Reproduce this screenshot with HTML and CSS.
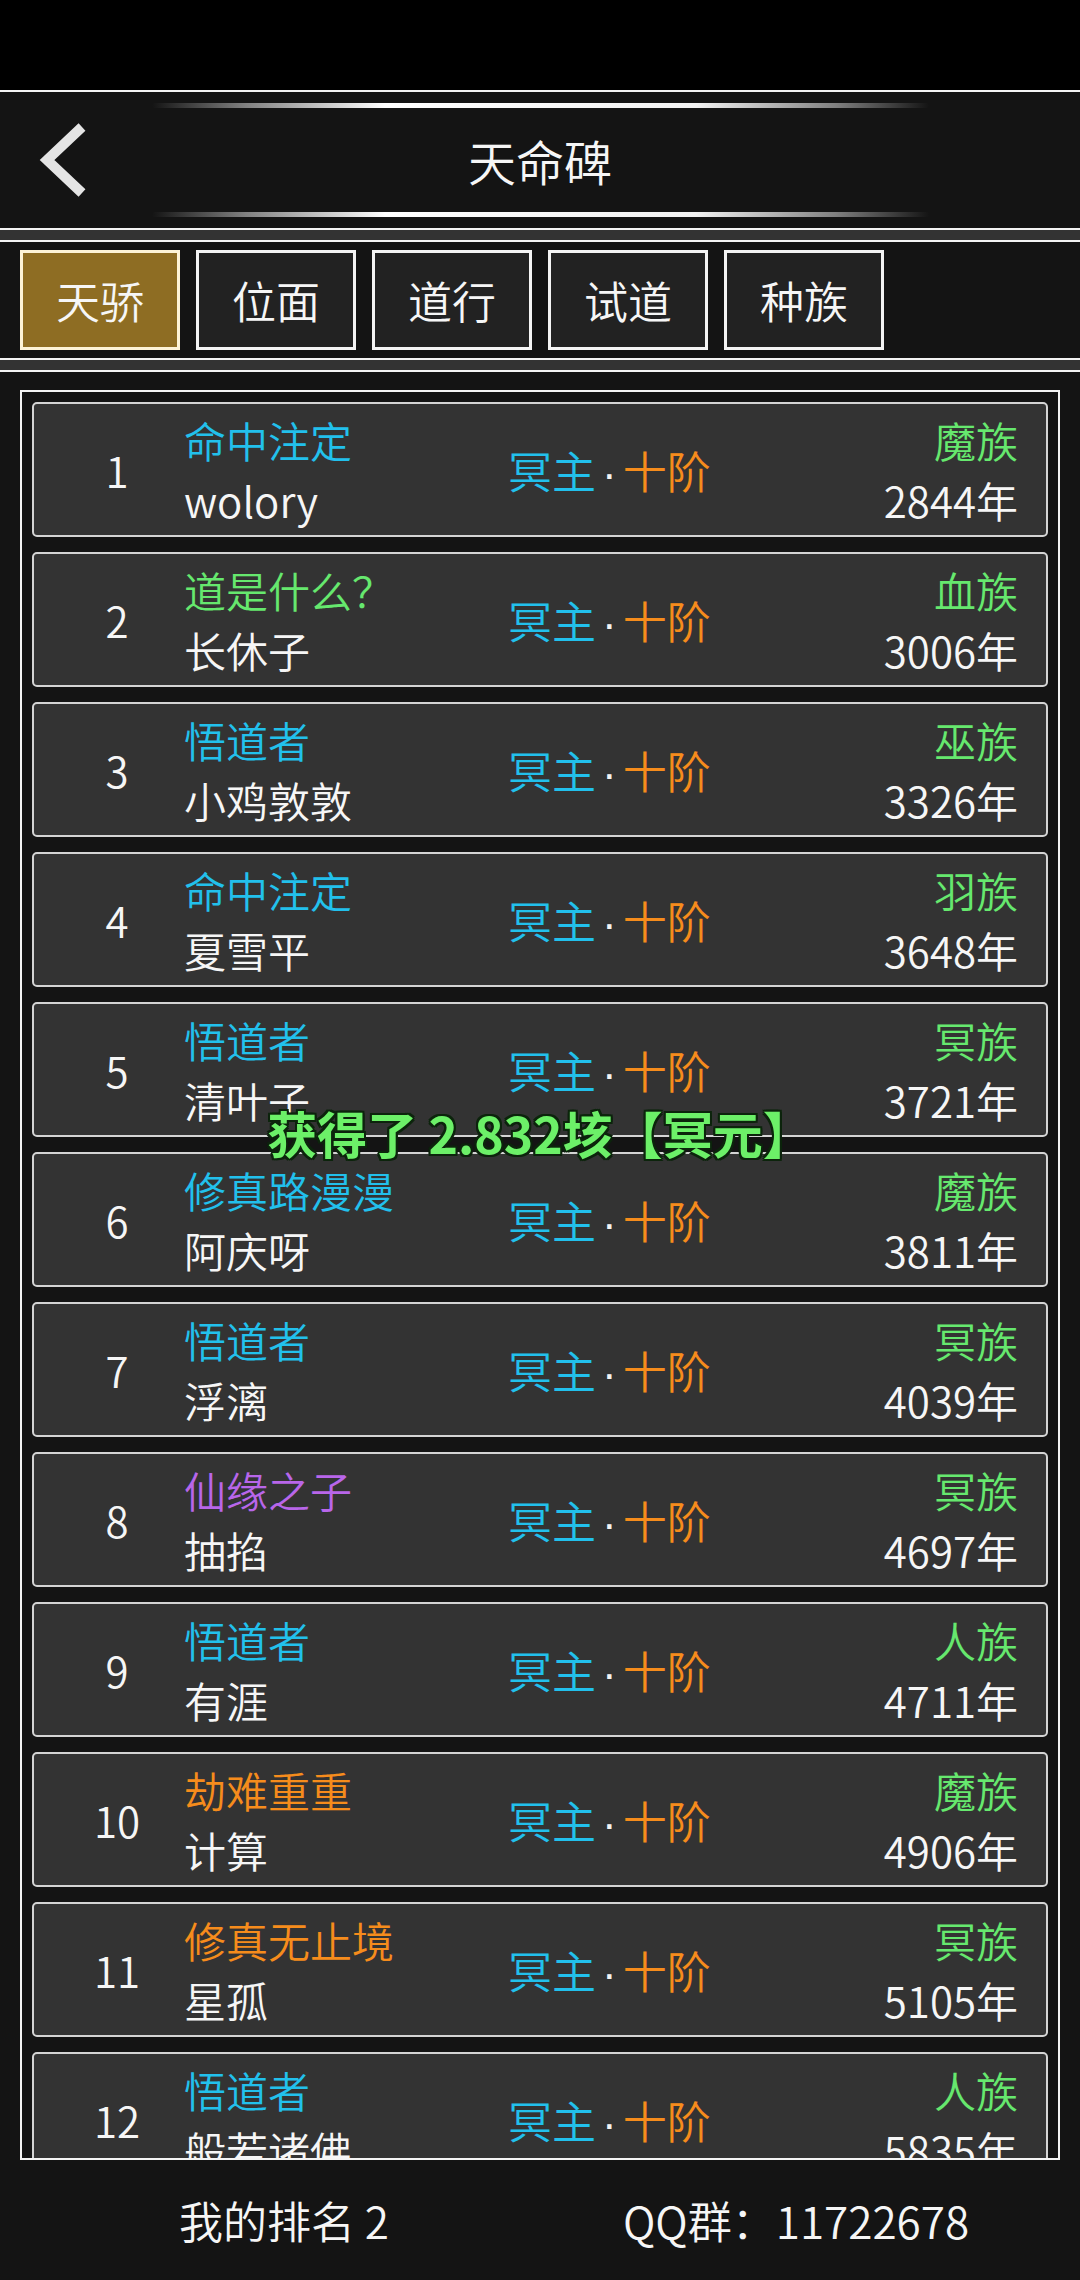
FILE: index.html
```html
<!DOCTYPE html>
<html lang="zh-CN">
<head>
    <meta charset="UTF-8">
    <meta name="viewport" content="width=device-width, initial-scale=1.0">
    <title>天命碑</title>
    <link rel="stylesheet" href="styles.css">
</head>
<body>
    <!-- 状态栏 -->
    <div class="status-bar"></div>

    <!-- 标题栏 -->
    <header class="top-bar">
        <div class="glow-line"></div>
        <div class="title-row">
            <a class="back" href="#">
                <svg width="60" height="80" viewBox="0 0 60 80">
                    <polyline points="47,7 12,40 47,73" fill="none" stroke="#e4e4e4" stroke-width="10" stroke-linejoin="miter"/>
                </svg>
            </a>
            <h1>天命碑</h1>
            <span></span>
        </div>
        <div class="glow-line"></div>
    </header>

    <div class="gap"></div>

    <!-- 分类 -->
    <nav class="tabs">
        <a class="tab active" href="#">天骄</a>
        <a class="tab" href="#">位面</a>
        <a class="tab" href="#">道行</a>
        <a class="tab" href="#">试道</a>
        <a class="tab" href="#">种族</a>
    </nav>

    <div class="gap"></div>

    <!-- 排行榜 -->
    <main class="board">
        <div class="list">
            <div class="row">
                <div class="rank">1</div>
                <div class="info"><div class="title cyan">命中注定</div><div class="name">wolory</div></div>
                <div class="realm"><span class="cyan">冥主</span><span class="dot">·</span><span class="orange">十阶</span></div>
                <div class="side"><div class="race">魔族</div><div class="age">2844年</div></div>
            </div>
            <div class="row">
                <div class="rank">2</div>
                <div class="info"><div class="title green">道是什么？</div><div class="name">长休子</div></div>
                <div class="realm"><span class="cyan">冥主</span><span class="dot">·</span><span class="orange">十阶</span></div>
                <div class="side"><div class="race">血族</div><div class="age">3006年</div></div>
            </div>
            <div class="row">
                <div class="rank">3</div>
                <div class="info"><div class="title cyan">悟道者</div><div class="name">小鸡敦敦</div></div>
                <div class="realm"><span class="cyan">冥主</span><span class="dot">·</span><span class="orange">十阶</span></div>
                <div class="side"><div class="race">巫族</div><div class="age">3326年</div></div>
            </div>
            <div class="row">
                <div class="rank">4</div>
                <div class="info"><div class="title cyan">命中注定</div><div class="name">夏雪平</div></div>
                <div class="realm"><span class="cyan">冥主</span><span class="dot">·</span><span class="orange">十阶</span></div>
                <div class="side"><div class="race">羽族</div><div class="age">3648年</div></div>
            </div>
            <div class="row">
                <div class="rank">5</div>
                <div class="info"><div class="title cyan">悟道者</div><div class="name">清叶子</div></div>
                <div class="realm"><span class="cyan">冥主</span><span class="dot">·</span><span class="orange">十阶</span></div>
                <div class="side"><div class="race">冥族</div><div class="age">3721年</div></div>
            </div>
            <div class="row">
                <div class="rank">6</div>
                <div class="info"><div class="title cyan">修真路漫漫</div><div class="name">阿庆呀</div></div>
                <div class="realm"><span class="cyan">冥主</span><span class="dot">·</span><span class="orange">十阶</span></div>
                <div class="side"><div class="race">魔族</div><div class="age">3811年</div></div>
            </div>
            <div class="row">
                <div class="rank">7</div>
                <div class="info"><div class="title cyan">悟道者</div><div class="name">浮漓</div></div>
                <div class="realm"><span class="cyan">冥主</span><span class="dot">·</span><span class="orange">十阶</span></div>
                <div class="side"><div class="race">冥族</div><div class="age">4039年</div></div>
            </div>
            <div class="row">
                <div class="rank">8</div>
                <div class="info"><div class="title purple">仙缘之子</div><div class="name">抽掐</div></div>
                <div class="realm"><span class="cyan">冥主</span><span class="dot">·</span><span class="orange">十阶</span></div>
                <div class="side"><div class="race">冥族</div><div class="age">4697年</div></div>
            </div>
            <div class="row">
                <div class="rank">9</div>
                <div class="info"><div class="title cyan">悟道者</div><div class="name">有涯</div></div>
                <div class="realm"><span class="cyan">冥主</span><span class="dot">·</span><span class="orange">十阶</span></div>
                <div class="side"><div class="race">人族</div><div class="age">4711年</div></div>
            </div>
            <div class="row">
                <div class="rank">10</div>
                <div class="info"><div class="title orange">劫难重重</div><div class="name">计算</div></div>
                <div class="realm"><span class="cyan">冥主</span><span class="dot">·</span><span class="orange">十阶</span></div>
                <div class="side"><div class="race">魔族</div><div class="age">4906年</div></div>
            </div>
            <div class="row">
                <div class="rank">11</div>
                <div class="info"><div class="title orange">修真无止境</div><div class="name">星孤</div></div>
                <div class="realm"><span class="cyan">冥主</span><span class="dot">·</span><span class="orange">十阶</span></div>
                <div class="side"><div class="race">冥族</div><div class="age">5105年</div></div>
            </div>
            <div class="row">
                <div class="rank">12</div>
                <div class="info"><div class="title cyan">悟道者</div><div class="name">般若诸佛</div></div>
                <div class="realm"><span class="cyan">冥主</span><span class="dot">·</span><span class="orange">十阶</span></div>
                <div class="side"><div class="race">人族</div><div class="age">5835年</div></div>
            </div>
        </div>

        <!-- 底部 -->
        <footer class="footer">
            <span>我的排名 2</span>
            <span>QQ群：11722678</span>
        </footer>
    </main>

    <!-- 提示 -->
    <div class="toast">获得了 2.832垓【冥元】</div>
</body>
</html>
```

FILE: styles.css
```css
/* 页面 */
body {
    margin: 0;
    width: 1080px;
    height: 2280px;
    overflow: hidden;
    position: relative;
    background-color: #000;
    color: #f6f6f6;
    font-family: "Noto Sans CJK SC", "Noto Sans", sans-serif;
    font-weight: 350;
}

.status-bar {
    height: 90px;
    background-color: #000;
}

/* 标题栏 */
.top-bar {
    background-color: #141414;
    border-top: 2px solid #f4f4f4;
    border-bottom: 2px solid #f4f4f4;
    height: 136px;
    display: flex;
    flex-direction: column;
    align-items: center;
}

.glow-line {
    width: 777px;
    height: 5px;
    margin: 11px 0 0;
    border-radius: 3px;
    background: linear-gradient(to right, rgba(255,255,255,0), rgba(200,200,200,0.6) 12%, #fff 30%, #f2f2f2 70%, rgba(200,200,200,0.6) 88%, rgba(255,255,255,0));
}

.glow-line:last-child {
    margin: 0 0 11px;
}

.title-row {
    width: 100%;
    height: 104px;
    display: grid;
    grid-template-columns: 1fr auto 1fr;
    align-items: center;
}

.back {
    display: flex;
    padding-left: 35px;
}

.title-row h1 {
    margin: 0;
    font-size: 48px;
    font-weight: 350;
    line-height: 1;
    color: #f6f6f6;
}

.gap {
    height: 10px;
    background-color: #333;
}

/* 分类 */
.tabs {
    background-color: #141414;
    border-top: 2px solid #f4f4f4;
    border-bottom: 2px solid #f4f4f4;
    height: 100px;
    padding: 8px 20px;
    display: flex;
    gap: 16px;
}

.tab {
    width: 154px;
    border: 3px solid #f4f4f4;
    background-color: #222;
    color: #f6f6f6;
    text-decoration: none;
    font-size: 44px;
    display: flex;
    align-items: center;
    justify-content: center;
}

.tab.active {
    background-color: #8e6d23;
    border-color: #fdf3d6;
}

/* 排行榜 */
.board {
    background-color: #141414;
    border-top: 2px solid #f4f4f4;
    height: 1908px;
    display: flex;
    flex-direction: column;
}

.list {
    margin: 18px 20px 0;
    height: 1756px;
    border: 2px solid #f4f4f4;
    padding: 10px 10px 0;
    overflow: hidden;
    display: flex;
    flex-direction: column;
    gap: 15px;
}

.row {
    flex: none;
    height: 131px;
    border: 2px solid #d4d4d4;
    border-radius: 5px;
    background-color: #333;
    display: flex;
    align-items: center;
    font-size: 42px;
}

.rank {
    width: 134px;
    margin-left: 16px;
    text-align: center;
}

.info {
    width: 324px;
    line-height: 60px;
}

.title, .race {
    white-space: nowrap;
}

.realm {
    font-size: 44px;
    white-space: nowrap;
}

.dot {
    font-family: "Liberation Sans", sans-serif;
    color: #f4f4f4;
    margin: 0 6px;
}

.side {
    flex: 1;
    text-align: right;
    padding-right: 28px;
    line-height: 60px;
}

.cyan { color: #22c0ec; }
.green { color: #66e86e; }
.orange { color: #f68c1c; }
.purple { color: #b866ea; }
.race { color: #66e86e; }

/* 底部 */
.footer {
    flex: 1;
    padding: 0 28px;
    display: grid;
    grid-template-columns: 1fr 1fr;
    align-items: center;
    text-align: center;
    font-size: 44px;
}

/* 提示 */
.toast {
    position: absolute;
    left: 0;
    right: 0;
    top: 1099px;
    text-align: center;
    font-size: 50px;
    font-weight: bold;
    line-height: 66px;
    color: #6cf068;
    text-shadow: 2px 2px 0 #0c240c, -2px -2px 0 #0c240c, 2px -2px 0 #0c240c, -2px 2px 0 #0c240c, 0 2px 0 #0c240c, 0 -2px 0 #0c240c, 2px 0 0 #0c240c, -2px 0 0 #0c240c;
}
```
